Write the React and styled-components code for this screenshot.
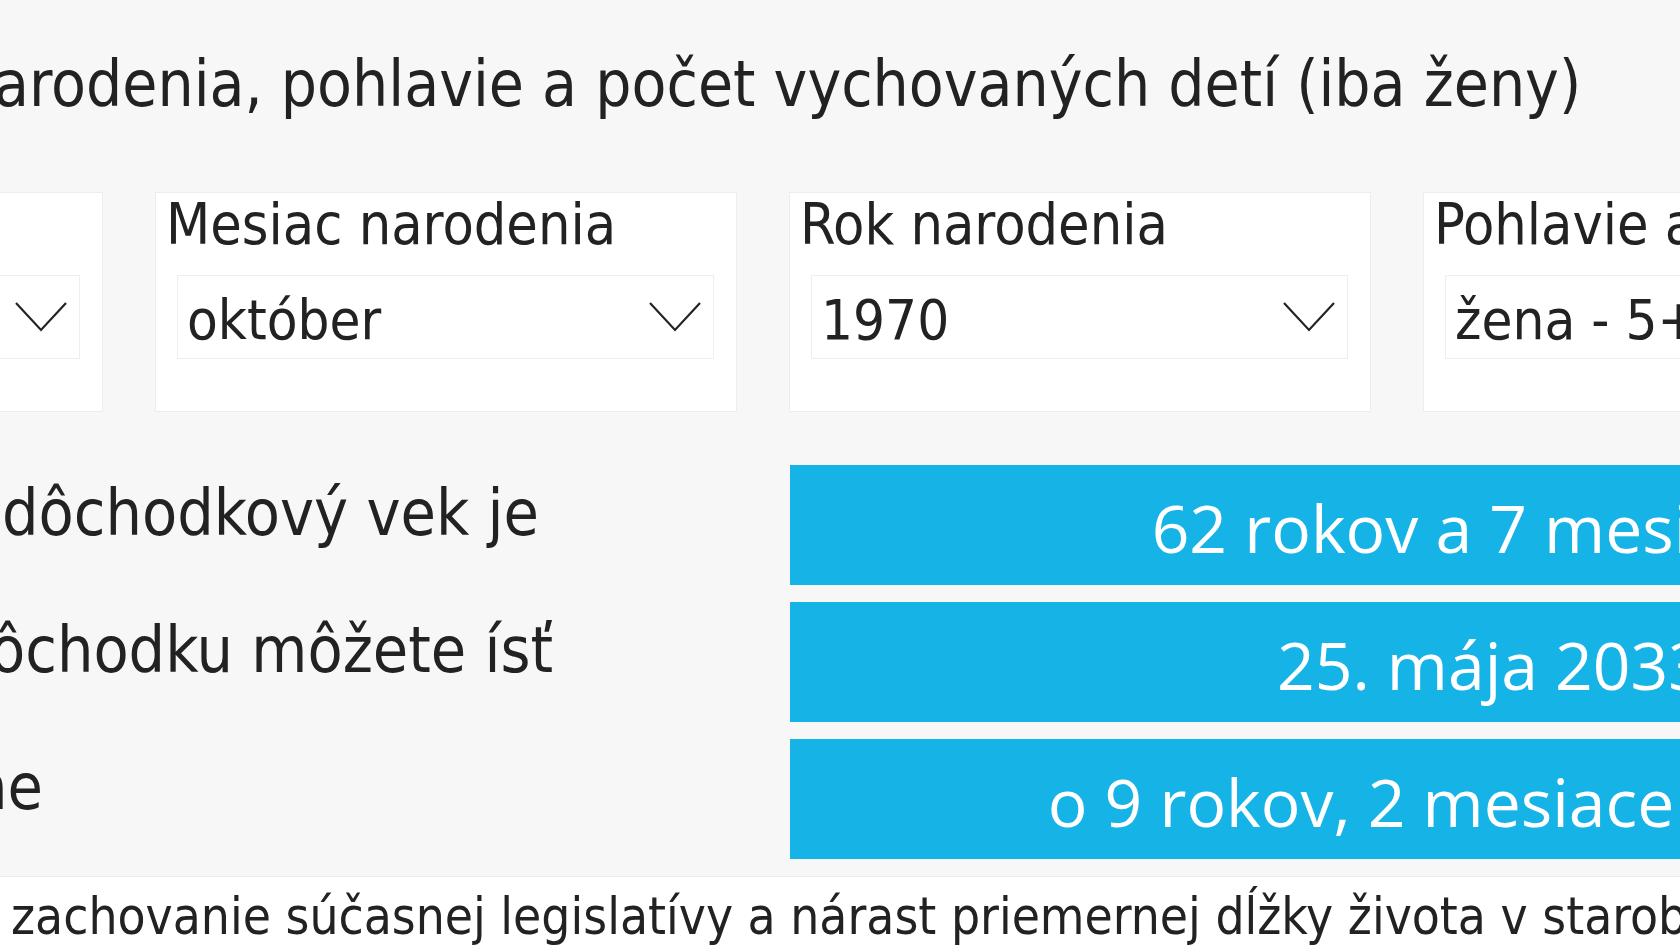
import styled, { createGlobalStyle } from "styled-components";

const GlobalStyle = createGlobalStyle`
  html,
  body {
    margin: 0;
    padding: 0;
    background: #f7f7f7;
    overflow: hidden;
  }
  body {
    font-family: "DejaVu Sans Condensed", "DejaVu Sans", Verdana, sans-serif;
    font-stretch: condensed;
    color: #222;
  }
`;

const slicers = [
  { label: "Deň narodenia", value: "25" },
  { label: "Mesiac narodenia", value: "október" },
  { label: "Rok narodenia", value: "1970" },
  { label: "Pohlavie a počet detí", value: "žena - 5+", noArrow: true },
];

const results = [
  { label: "dôchodkový vek je", offset: 2, value: "62 rokov a 7 mesiacov" },
  { label: "ôchodku môžete ísť", offset: -10, value: "25. mája 2033" },
  { label: "ne", offset: -29, value: "o 9 rokov, 2 mesiace a 25 dní" },
];

function Chevron() {
  return (
    <ChevronIcon viewBox="0 0 52 30" fill="none">
      <polyline points="1,1 26,28 51,1" stroke="#252423" strokeWidth="2.2" />
    </ChevronIcon>
  );
}

function App() {
  return (
    <>
      <GlobalStyle />
      <Page>
        <Title>arodenia, pohlavie a počet vychovaných detí (iba ženy)</Title>

        <SlicerRow>
          {slicers.map((s) => (
            <Slicer key={s.label}>
              <SlicerLabel>{s.label}</SlicerLabel>
              <Dropdown>
                <DropdownValue>{s.value}</DropdownValue>
                {!s.noArrow && <Chevron />}
              </Dropdown>
            </Slicer>
          ))}
        </SlicerRow>

        <ResultGrid>
          {results.map((r) => (
            <Row key={r.label}>
              <ResultLabel $offset={r.offset}>{r.label}</ResultLabel>
              <Card>
                <CardText>{r.value}</CardText>
              </Card>
            </Row>
          ))}
        </ResultGrid>

        <Footer>
          <FooterText>
            zachovanie súčasnej legislatívy a nárast priemernej dĺžky života v
            starobe
          </FooterText>
        </Footer>
      </Page>
    </>
  );
}
export default App;

///////// STYLES ///////

const Page = styled.div`
  width: 1680px;
  height: 945px;
  overflow: hidden;
  display: flex;
  flex-direction: column;
`;

const Title = styled.h1`
  margin: 0 0 0 -6px;
  padding-top: 53px;
  font-size: 63.5px;
  font-weight: normal;
  line-height: 1;
  white-space: nowrap;
`;

const SlicerRow = styled.div`
  display: flex;
  gap: 54px;
  margin: 76px 0 0 -478px;
`;

const Slicer = styled.div`
  flex: none;
  width: 580px;
  height: 218px;
  box-sizing: border-box;
  padding: 3px 0 0 10px;
  background: #fff;
  box-shadow: 0 0 0 1px #ededed;
`;

const SlicerLabel = styled.div`
  font-size: 57px;
  line-height: 1;
  white-space: nowrap;
`;

const Dropdown = styled.div`
  display: flex;
  align-items: center;
  justify-content: space-between;
  height: 82px;
  margin: 23px 23px 0 12px;
  padding: 0 12px 0 9px;
  background: #fff;
  box-shadow: 0 0 0 1px #eeeeee;
  overflow: hidden;
`;

const DropdownValue = styled.span`
  font-size: 56px;
  line-height: 1;
  padding-top: 7px;
  white-space: nowrap;
`;

const ChevronIcon = styled.svg`
  flex: none;
  width: 52px;
  height: 30px;
`;

const ResultGrid = styled.div`
  display: flex;
  flex-direction: column;
  gap: 17px;
  margin-top: 54px;
`;

const Row = styled.div`
  display: grid;
  grid-template-columns: 790px 1403px;
  height: 120px;
`;

const ResultLabel = styled.div`
  margin-left: ${(p) => p.$offset}px;
  padding-top: 16px;
  font-size: 64px;
  line-height: 1;
  white-space: nowrap;
`;

const Card = styled.div`
  display: flex;
  align-items: center;
  justify-content: center;
  background: #15b3e6;
  color: #fff;
`;

const CardText = styled.span`
  padding-top: 4px;
  font-family: "Open Sans", "Noto Sans", sans-serif;
  font-stretch: normal;
  font-size: 66px;
  letter-spacing: 0;
  line-height: 1;
  white-space: nowrap;
`;

const Footer = styled.footer`
  flex: 1;
  margin-top: 17px;
  background: #fff;
  border-top: 1px solid #ebebeb;
`;

const FooterText = styled.div`
  padding: 14px 0 0 11px;
  font-size: 51px;
  line-height: 1;
  white-space: nowrap;
`;
